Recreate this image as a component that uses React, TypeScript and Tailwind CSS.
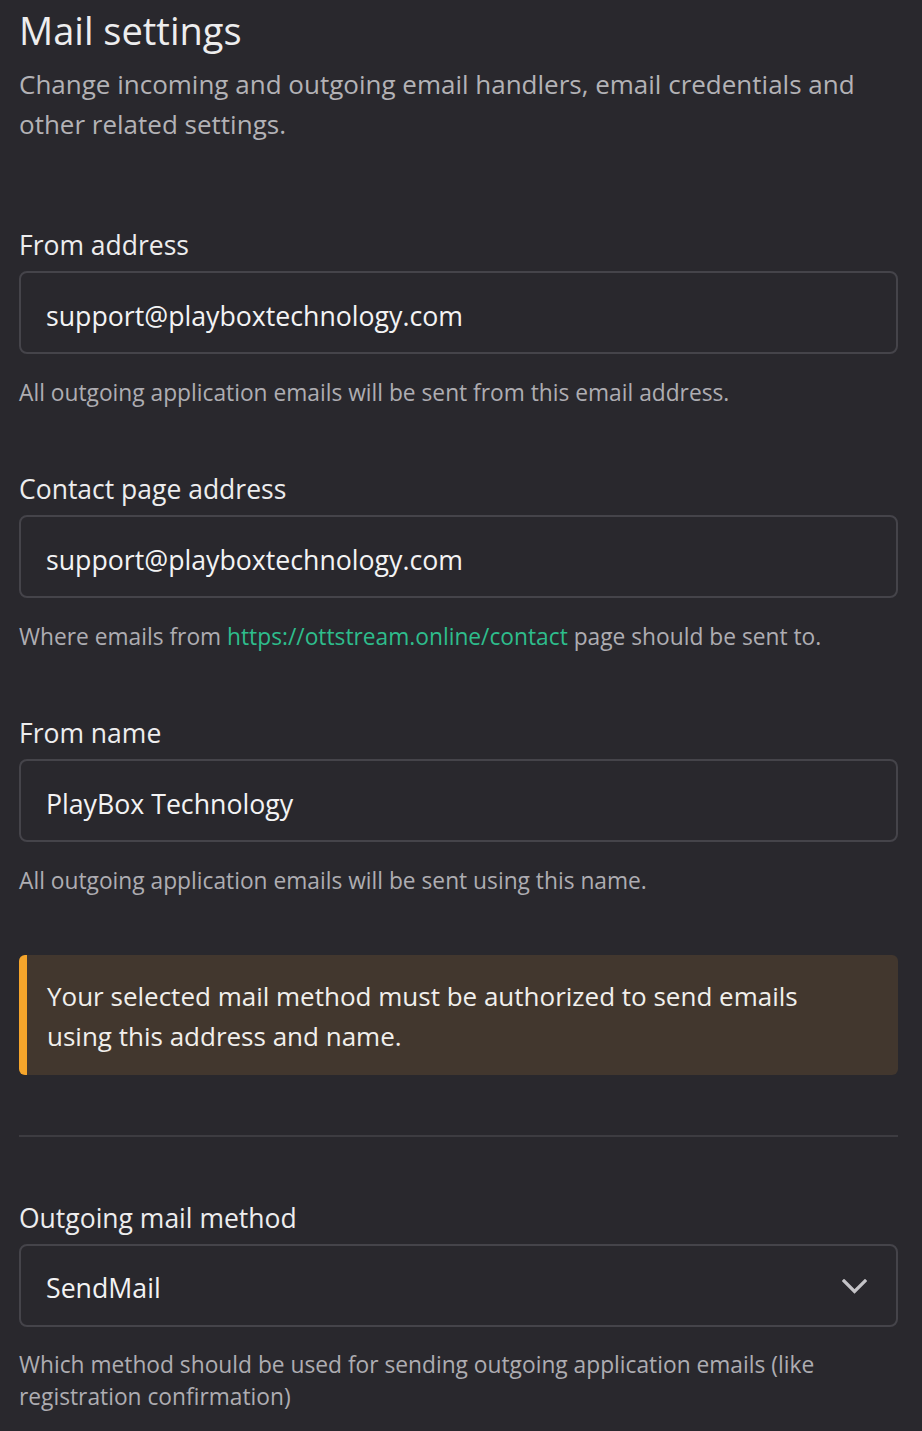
const fields = [
  {
    label: 'From address',
    value: 'support@playboxtechnology.com',
    help: <>All outgoing application emails will be sent from this email address.</>,
  },
  {
    label: 'Contact page address',
    value: 'support@playboxtechnology.com',
    help: (
      <>
        Where emails from{' '}
        <a href="#" className="text-[#2ebd8c]">
          https://ottstream.online/contact
        </a>{' '}
        page should be sent to.
      </>
    ),
  },
  {
    label: 'From name',
    value: 'PlayBox Technology',
    help: <>All outgoing application emails will be sent using this name.</>,
  },
];

export default function App() {
  return (
    <div
      className="min-h-screen bg-[#29282d] text-[#ededee] pl-[19px] pr-[24px]"
      style={{ fontFamily: '"Open Sans", "Noto Sans", sans-serif' }}
    >
      {/* Header */}
      <h1 className="pt-[6px] text-[38px] leading-[48px] font-normal">Mail settings</h1>
      <p className="mt-[10px] text-[26px] leading-[40px] text-[#b3b2b6]">
        Change incoming and outgoing email handlers, email credentials and other related settings.
      </p>

      {/* Sender fields */}
      <div className="mt-[83px] flex flex-col gap-[63px]">
        {fields.map((f) => (
          <div key={f.label}>
            <label className="block text-[26.5px] leading-[36px]">{f.label}</label>
            <input
              readOnly
              value={f.value}
              className="mt-[8px] w-full h-[83px] rounded-[8px] border-2 border-[#45444a] bg-transparent pl-[25px] pr-[25px] pt-[5px] text-[26.7px] text-[#f3f3f4] outline-none"
            />
            <p className="mt-[24px] text-[22.75px] leading-[30px] text-[#aeadb2]">{f.help}</p>
          </div>
        ))}
      </div>

      {/* Warning */}
      <div className="mt-[59px] rounded-[6px] bg-[#42372e] border-l-[8px] border-[#f5a52b] pl-[20px] pr-[44px] pt-[21px] pb-[19px] text-[26px] leading-[40px] text-[#f1efec]">
        Your selected mail method must be authorized to send emails using this address and name.
      </div>

      <div className="mt-[60px] h-[2px] bg-[#3d3c41]" />

      {/* Mail method */}
      <div className="mt-[63px]">
        <label className="block text-[26.5px] leading-[36px]">Outgoing mail method</label>
        <div className="mt-[8px] h-[83px] rounded-[8px] border-2 border-[#45444a] flex items-center justify-between pl-[25px] pr-[29px]">
          <span className="mt-[5px] text-[26.7px] text-[#f3f3f4]">SendMail</span>
          <svg width="25" height="16" viewBox="0 0 25 16" fill="none" className="mt-[2px]">
            <polyline
              points="2,2 12.5,12.5 23,2"
              stroke="#c4c3c7"
              strokeWidth="3.2"
              strokeLinecap="square"
              strokeLinejoin="miter"
            />
          </svg>
        </div>
        <p className="mt-[22px] text-[22.75px] leading-[32px] text-[#aeadb2]">
          Which method should be used for sending outgoing application emails (like registration confirmation)
        </p>
      </div>
    </div>
  );
}
